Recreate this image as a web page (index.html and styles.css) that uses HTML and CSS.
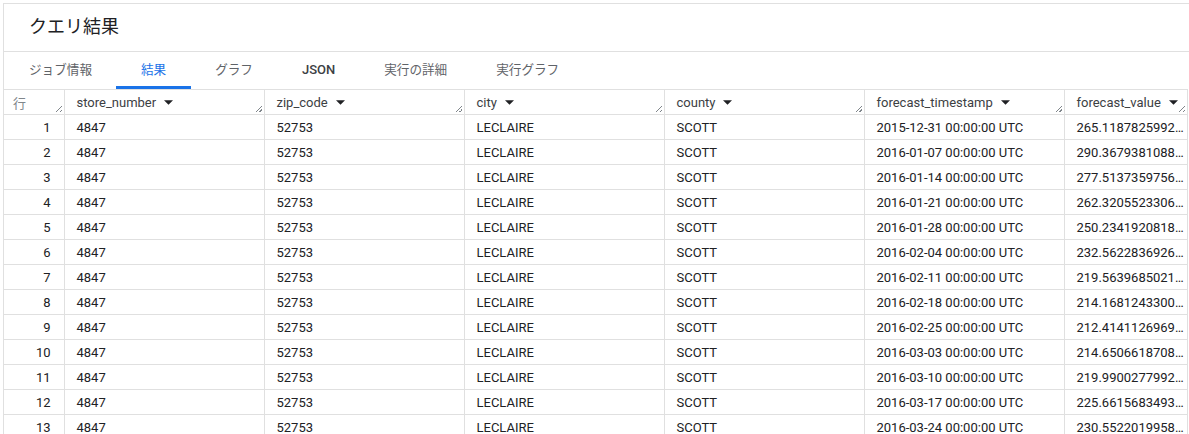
FILE: index.html
```html
<!DOCTYPE html>
<html lang="ja">
<head>
    <meta charset="UTF-8">
    <title>クエリ結果</title>
    <link rel="stylesheet" href="styles.css">
</head>
<body>
    <div id="panel">
        <div class="title">クエリ結果</div>
        <div class="tabs">
            <div class="tab">ジョブ情報</div>
            <div class="tab active">結果</div>
            <div class="tab">グラフ</div>
            <div class="tab json">JSON</div>
            <div class="tab">実行の詳細</div>
            <div class="tab">実行グラフ</div>
        </div>
        <table id="results">
            <colgroup>
                <col class="c-row">
                <col class="c-wide">
                <col class="c-wide">
                <col class="c-wide">
                <col class="c-wide">
                <col class="c-wide">
                <col class="c-last">
            </colgroup>
            <thead>
                <tr>
                    <th class="rownum">行<span class="grip"></span></th>
                    <th>store_number<svg class="sort" viewBox="0 0 10 5"><path d="M0 0h10L5 5z"/></svg><span class="grip"></span></th>
                    <th>zip_code<svg class="sort" viewBox="0 0 10 5"><path d="M0 0h10L5 5z"/></svg><span class="grip"></span></th>
                    <th>city<svg class="sort" viewBox="0 0 10 5"><path d="M0 0h10L5 5z"/></svg><span class="grip"></span></th>
                    <th>county<svg class="sort" viewBox="0 0 10 5"><path d="M0 0h10L5 5z"/></svg><span class="grip"></span></th>
                    <th>forecast_timestamp<svg class="sort" viewBox="0 0 10 5"><path d="M0 0h10L5 5z"/></svg><span class="grip"></span></th>
                    <th>forecast_value<svg class="sort" viewBox="0 0 10 5"><path d="M0 0h10L5 5z"/></svg><span class="grip"></span></th>
                </tr>
            </thead>
            <tbody id="rows"></tbody>
        </table>
    </div>

    <script>
        const data = [
            ['2015-12-31', '265.1187825992…'],
            ['2016-01-07', '290.3679381088…'],
            ['2016-01-14', '277.5137359756…'],
            ['2016-01-21', '262.3205523306…'],
            ['2016-01-28', '250.2341920818…'],
            ['2016-02-04', '232.5622836926…'],
            ['2016-02-11', '219.5639685021…'],
            ['2016-02-18', '214.1681243300…'],
            ['2016-02-25', '212.4141126969…'],
            ['2016-03-03', '214.6506618708…'],
            ['2016-03-10', '219.9900277992…'],
            ['2016-03-17', '225.6615683493…'],
            ['2016-03-24', '230.5522019958…']
        ];

        const tbody = document.getElementById('rows');
        data.forEach(function(row, i) {
            const tr = document.createElement('tr');
            tr.innerHTML =
                '<td class="rownum">' + (i + 1) + '</td>' +
                '<td>4847</td>' +
                '<td>52753</td>' +
                '<td>LECLAIRE</td>' +
                '<td>SCOTT</td>' +
                '<td>' + row[0] + ' 00:00:00 UTC</td>' +
                '<td>' + row[1] + '</td>';
            tbody.appendChild(tr);
        });
    </script>
</body>
</html>
```

FILE: styles.css
```css
body {
    margin: 0;
    background-color: #fff;
    font-family: Roboto, "Noto Sans CJK JP", sans-serif;
    color: #202124;
    overflow: hidden;
}
#panel {
    margin: 3px 0 0 3px;
    border-top: 1px solid #e0e0e0;
    border-left: 1px solid #e0e0e0;
    width: 1186px;
}
.title {
    height: 47px;
    line-height: 45px;
    padding-left: 25px;
    font-size: 18px;
    border-bottom: 1px solid #e0e0e0;
}
.tabs {
    display: flex;
    height: 37px;
    padding-left: 0.5px;
}
.tab {
    padding: 0 24.5px;
    line-height: 36px;
    font-size: 12.6px;
    color: #5f6368;
    box-sizing: border-box;
    height: 37px;
}
.tab.active {
    color: #1a73e8;
    border-bottom: 3px solid #1a73e8;
}
.tab.json {
    color: #3c4043;
    font-weight: 500;
    font-size: 13px;
}
#results {
    border-collapse: collapse;
    table-layout: fixed;
    width: 1183px;
    font-size: 13px;
}
.c-row { width: 60px; }
.c-wide { width: 200px; }
.c-last { width: 123px; }
th, td {
    border: 1px solid #e0e0e0;
    height: 25px;
    padding: 0 12px;
    white-space: nowrap;
    overflow: hidden;
    box-sizing: border-box;
}
#results tr > :first-child {
    border-left: none;
}
th {
    position: relative;
    text-align: left;
    font-weight: 400;
    color: #3c4043;
}
th.rownum {
    color: #80868b;
    padding-left: 9px;
}
td.rownum {
    text-align: right;
    padding-right: 13px;
}
.sort {
    width: 9px;
    height: 5px;
    margin-left: 8px;
    fill: #202124;
    vertical-align: 2px;
}
.grip {
    position: absolute;
    right: 2px;
    bottom: 2px;
    width: 6px;
    height: 6px;
    background: linear-gradient(135deg, transparent 45%, #80868b 45%, #80868b 55%, transparent 55%, transparent 75%, #80868b 75%, #80868b 85%, transparent 85%);
}
```
